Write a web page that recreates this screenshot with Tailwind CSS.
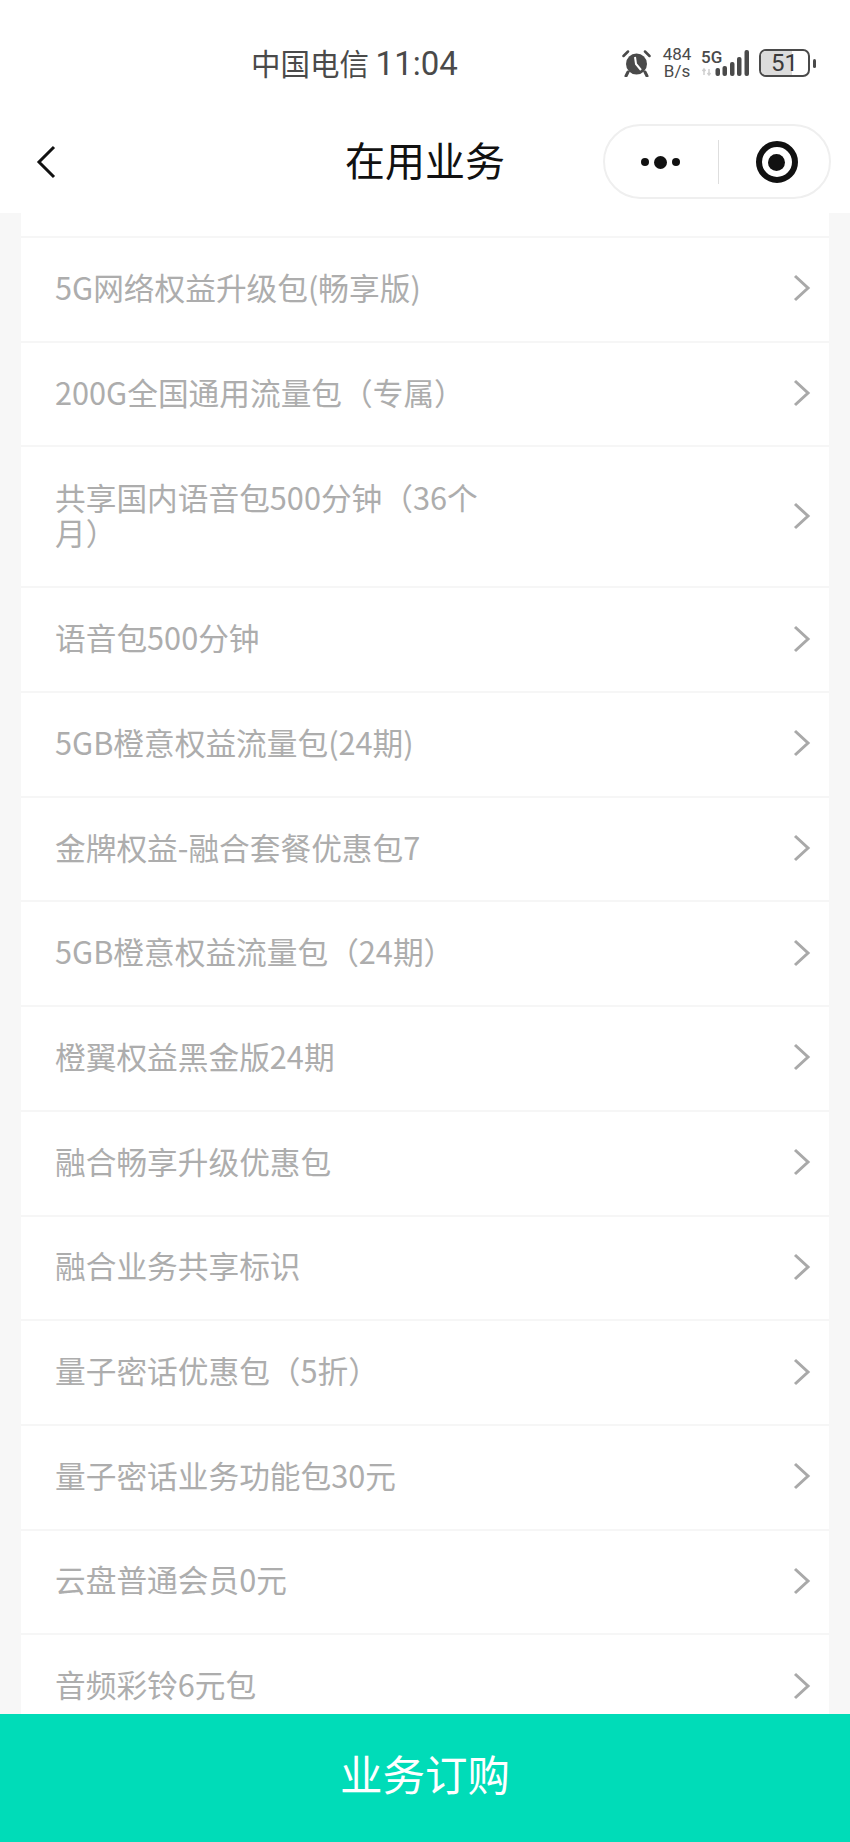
<!DOCTYPE html>
<html lang="zh-CN">
<head>
<meta charset="utf-8">
<script src="https://cdn.jsdelivr.net/npm/@tailwindcss/browser@4"></script>
</head>
<body class="m-0 bg-white">
<div class="flex flex-col w-[850px] h-[1842px] overflow-hidden bg-white font-['Noto_Sans_CJK_SC','Noto_Sans',sans-serif]">
  <header class="shrink-0 h-[213px] bg-white">
    <div class="h-[114px] pt-[12px] flex items-center text-[#4a4a4a]">
      <div class="h-[102px] flex items-center w-full">
        <span class="ml-[251px] text-[29.5px] leading-none whitespace-nowrap">中国电信 <span class="font-['Roboto'] text-[33px]">11:04</span></span>
        <div class="ml-auto mr-[40px] flex items-center">
          <svg width="29" height="28" viewBox="0 0 29 28" class="mr-[11px]">
            <circle cx="14.5" cy="15" r="10.5" fill="#4a4a4a"/>
            <path d="M1.5 7 L6 2.5 M27.5 7 L23 2.5" stroke="#4a4a4a" stroke-width="2.5" stroke-linecap="round"/>
            <path d="M6 23 L4 27 M23 23 L25 27" stroke="#4a4a4a" stroke-width="3" stroke-linecap="round"/>
            <path d="M13 8 L14 15 L19 21" stroke="#fff" stroke-width="2" fill="none"/>
          </svg>
          <div class="w-[30px] mr-[9px] flex flex-col items-center font-['Roboto'] text-[17px] leading-[17px] text-[#4a4a4a]">
            <span>484</span><span>B/s</span>
          </div>
          <div class="relative w-[49px] h-[28px] mr-[9px]">
            <span class="absolute left-0 top-[0px] font-['Roboto'] font-medium text-[17px] leading-[17px] text-[#4a4a4a]">5G</span>
            <svg width="49" height="28" viewBox="0 0 49 28" class="absolute left-0 top-0">
              <path d="M3 26 V20 M1.5 22 L3 20 L4.5 22 M8 20 V26 M6.5 24 L8 26 L9.5 24" fill="none" stroke="#cfcfcf" stroke-width="1.5"/>
              <g fill="#4a4a4a">
                <rect x="14.5" y="19" width="4.5" height="8" rx="2"/>
                <rect x="21.5" y="17" width="4.5" height="10" rx="2"/>
                <rect x="29" y="13" width="4.5" height="14" rx="2"/>
                <rect x="36" y="8" width="4.5" height="19" rx="2"/>
                <rect x="43.5" y="1" width="4.5" height="26" rx="2"/>
              </g>
            </svg>
          </div>
          <div class="relative w-[51px] h-[28px] rounded-[7px] border-[2px] border-[#4a4a4a] overflow-hidden flex items-center justify-center">
            <div class="absolute left-0 top-0 bottom-0 w-[31px] bg-[#dcdcdc]"></div>
            <span class="relative font-['Roboto'] text-[24px] leading-none text-[#3a3a3a]">51</span>
          </div>
          <div class="w-[3px] h-[9px] ml-[3px] mr-[-6px] rounded-full bg-[#4a4a4a]"></div>
        </div>
      </div>
    </div>
    <div class="h-[99px] pb-[3px] grid grid-cols-[1fr_auto_1fr] items-center">
      <div class="pl-[36px]">
        <svg width="20" height="34" viewBox="0 0 20 34"><path d="M18 2 L3 17 L18 32" fill="none" stroke="#111" stroke-width="3"/></svg>
      </div>
      <h1 class="mb-[6px] text-[40px] leading-none font-normal text-[#111]">在用业务</h1>
      <div class="flex justify-end pr-[19px]">
        <div class="mb-[2px] pt-[2px] w-[228px] h-[75px] rounded-full border-[2px] border-[#efefef] bg-white flex items-center">
          <div class="w-[113px] pr-[2px] flex items-center justify-center gap-[5px]">
            <span class="w-[8px] h-[8px] rounded-full bg-[#111]"></span>
            <span class="w-[13px] h-[13px] rounded-full bg-[#111]"></span>
            <span class="w-[8px] h-[8px] rounded-full bg-[#111]"></span>
          </div>
          <div class="w-[1px] h-[44px] bg-[#dedede]"></div>
          <div class="flex-1 pl-[5px] flex items-center justify-center">
            <div class="w-[42px] h-[42px] rounded-full border-[6px] border-[#111] flex items-center justify-center">
              <span class="w-[17px] h-[17px] rounded-full bg-[#111]"></span>
            </div>
          </div>
        </div>
      </div>
    </div>
  </header>

  <main class="flex-1 overflow-hidden bg-[#f7f7f7] px-[21px]">
    <ul class="bg-white text-[30.7px] leading-[35px] text-[#adadad]">
      <li class="h-[25px] border-b-[2px] border-[#f6f6f6]"></li>
      <li class="h-[104.7px] pl-[34px] pr-[18px] flex items-center justify-between border-b-[2px] border-[#f6f6f6]"><span class="mb-[6px]">5G网络权益升级包(畅享版)</span><svg class="mb-[2px]" width="18" height="28" viewBox="0 0 18 28"><path d="M2 2 L15 14 L2 26" fill="none" stroke="#a9a9a9" stroke-width="3"/></svg></li>
      <li class="h-[104.7px] pl-[34px] pr-[18px] flex items-center justify-between border-b-[2px] border-[#f6f6f6]"><span class="mb-[6px]">200G全国通用流量包（专属）</span><svg class="mb-[2px]" width="18" height="28" viewBox="0 0 18 28"><path d="M2 2 L15 14 L2 26" fill="none" stroke="#a9a9a9" stroke-width="3"/></svg></li>
      <li class="h-[141px] pl-[34px] pr-[18px] flex items-center justify-between border-b-[2px] border-[#f6f6f6]"><span class="mb-[6px] w-[430px]">共享国内语音包500分钟（36个月）</span><svg class="mb-[2px]" width="18" height="28" viewBox="0 0 18 28"><path d="M2 2 L15 14 L2 26" fill="none" stroke="#a9a9a9" stroke-width="3"/></svg></li>
      <li class="h-[104.7px] pl-[34px] pr-[18px] flex items-center justify-between border-b-[2px] border-[#f6f6f6]"><span class="mb-[6px]">语音包500分钟</span><svg class="mb-[2px]" width="18" height="28" viewBox="0 0 18 28"><path d="M2 2 L15 14 L2 26" fill="none" stroke="#a9a9a9" stroke-width="3"/></svg></li>
      <li class="h-[104.7px] pl-[34px] pr-[18px] flex items-center justify-between border-b-[2px] border-[#f6f6f6]"><span class="mb-[6px]">5GB橙意权益流量包(24期)</span><svg class="mb-[2px]" width="18" height="28" viewBox="0 0 18 28"><path d="M2 2 L15 14 L2 26" fill="none" stroke="#a9a9a9" stroke-width="3"/></svg></li>
      <li class="h-[104.7px] pl-[34px] pr-[18px] flex items-center justify-between border-b-[2px] border-[#f6f6f6]"><span class="mb-[6px]">金牌权益-融合套餐优惠包7</span><svg class="mb-[2px]" width="18" height="28" viewBox="0 0 18 28"><path d="M2 2 L15 14 L2 26" fill="none" stroke="#a9a9a9" stroke-width="3"/></svg></li>
      <li class="h-[104.7px] pl-[34px] pr-[18px] flex items-center justify-between border-b-[2px] border-[#f6f6f6]"><span class="mb-[6px]">5GB橙意权益流量包（24期）</span><svg class="mb-[2px]" width="18" height="28" viewBox="0 0 18 28"><path d="M2 2 L15 14 L2 26" fill="none" stroke="#a9a9a9" stroke-width="3"/></svg></li>
      <li class="h-[104.7px] pl-[34px] pr-[18px] flex items-center justify-between border-b-[2px] border-[#f6f6f6]"><span class="mb-[6px]">橙翼权益黑金版24期</span><svg class="mb-[2px]" width="18" height="28" viewBox="0 0 18 28"><path d="M2 2 L15 14 L2 26" fill="none" stroke="#a9a9a9" stroke-width="3"/></svg></li>
      <li class="h-[104.7px] pl-[34px] pr-[18px] flex items-center justify-between border-b-[2px] border-[#f6f6f6]"><span class="mb-[6px]">融合畅享升级优惠包</span><svg class="mb-[2px]" width="18" height="28" viewBox="0 0 18 28"><path d="M2 2 L15 14 L2 26" fill="none" stroke="#a9a9a9" stroke-width="3"/></svg></li>
      <li class="h-[104.7px] pl-[34px] pr-[18px] flex items-center justify-between border-b-[2px] border-[#f6f6f6]"><span class="mb-[6px]">融合业务共享标识</span><svg class="mb-[2px]" width="18" height="28" viewBox="0 0 18 28"><path d="M2 2 L15 14 L2 26" fill="none" stroke="#a9a9a9" stroke-width="3"/></svg></li>
      <li class="h-[104.7px] pl-[34px] pr-[18px] flex items-center justify-between border-b-[2px] border-[#f6f6f6]"><span class="mb-[6px]">量子密话优惠包（5折）</span><svg class="mb-[2px]" width="18" height="28" viewBox="0 0 18 28"><path d="M2 2 L15 14 L2 26" fill="none" stroke="#a9a9a9" stroke-width="3"/></svg></li>
      <li class="h-[104.7px] pl-[34px] pr-[18px] flex items-center justify-between border-b-[2px] border-[#f6f6f6]"><span class="mb-[6px]">量子密话业务功能包30元</span><svg class="mb-[2px]" width="18" height="28" viewBox="0 0 18 28"><path d="M2 2 L15 14 L2 26" fill="none" stroke="#a9a9a9" stroke-width="3"/></svg></li>
      <li class="h-[104.7px] pl-[34px] pr-[18px] flex items-center justify-between border-b-[2px] border-[#f6f6f6]"><span class="mb-[6px]">云盘普通会员0元</span><svg class="mb-[2px]" width="18" height="28" viewBox="0 0 18 28"><path d="M2 2 L15 14 L2 26" fill="none" stroke="#a9a9a9" stroke-width="3"/></svg></li>
      <li class="h-[104.7px] pl-[34px] pr-[18px] flex items-center justify-between border-b-[2px] border-[#f6f6f6]"><span class="mb-[6px]">音频彩铃6元包</span><svg class="mb-[2px]" width="18" height="28" viewBox="0 0 18 28"><path d="M2 2 L15 14 L2 26" fill="none" stroke="#a9a9a9" stroke-width="3"/></svg></li>
    </ul>
  </main>

  <footer class="shrink-0 h-[128px] pb-[9px] bg-[#00dcb8] flex items-center justify-center text-white text-[42.5px] leading-none">业务订购</footer>
</div>
</body>
</html>
